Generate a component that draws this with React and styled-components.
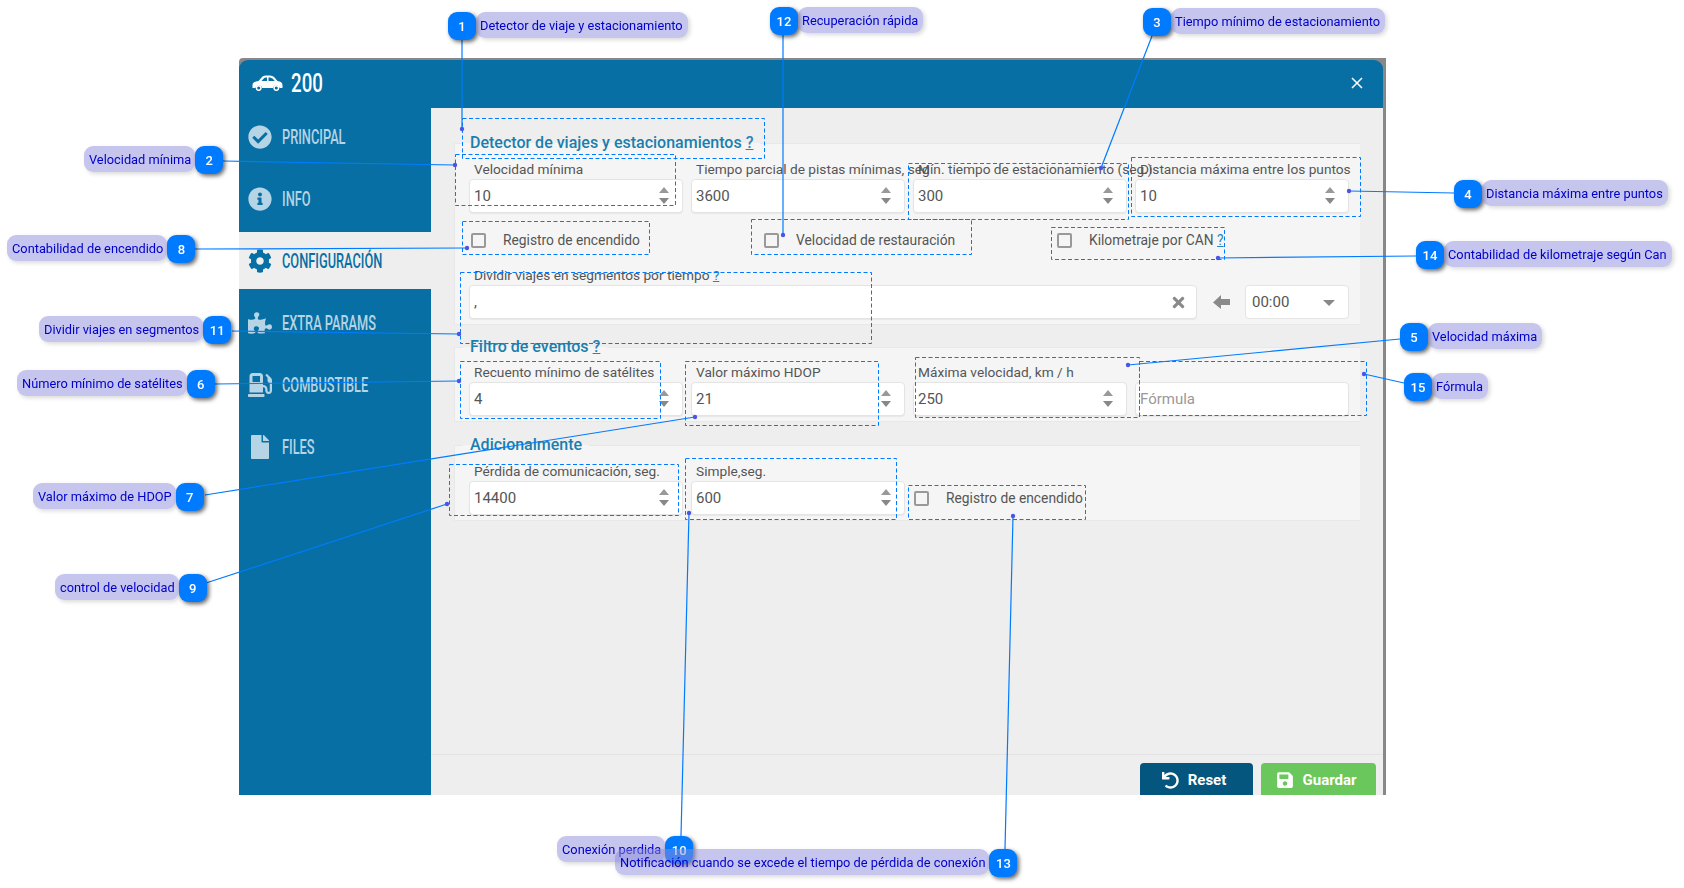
import React from 'react';
import styled, { createGlobalStyle } from 'styled-components';
import {
  FaCheckCircle,
  FaInfoCircle,
  FaCog,
  FaPuzzlePiece,
  FaGasPump,
  FaFile,
  FaTimes,
  FaUndo,
  FaSave,
} from 'react-icons/fa';

const TEAL = '#076fa3';
const BLUE = '#007bff';

const GlobalStyle = createGlobalStyle`
  html, body {
    margin: 0;
    background: #fff;
    overflow: hidden;
  }
  * {
    box-sizing: border-box;
  }
`;

const menu = [
  { name: 'PRINCIPAL', icon: FaCheckCircle },
  { name: 'INFO', icon: FaInfoCircle },
  { name: 'CONFIGURACIÓN', icon: FaCog, active: true },
  { name: 'EXTRA PARAMS', icon: FaPuzzlePiece },
  { name: 'COMBUSTIBLE', icon: FaGasPump },
  { name: 'FILES', icon: FaFile },
];

const callouts = [
  { n: 1, text: 'Detector de viaje y estacionamiento', x: 448, y: 12 },
  { n: 2, text: 'Velocidad mínima', x: 84, y: 146, left: true },
  { n: 3, text: 'Tiempo mínimo de estacionamiento', x: 1143, y: 8 },
  { n: 4, text: 'Distancia máxima entre puntos', x: 1454, y: 180 },
  { n: 5, text: 'Velocidad máxima', x: 1400, y: 323 },
  { n: 6, text: 'Número mínimo de satélites', x: 17, y: 370, left: true },
  { n: 7, text: 'Valor máximo de HDOP', x: 33, y: 483, left: true },
  { n: 8, text: 'Contabilidad de encendido', x: 7, y: 235, left: true },
  { n: 9, text: 'control de velocidad', x: 55, y: 574, left: true },
  { n: 10, text: 'Conexión perdida', x: 557, y: 836, left: true },
  { n: 11, text: 'Dividir viajes en segmentos', x: 39, y: 316, left: true },
  { n: 12, text: 'Recuperación rápida', x: 770, y: 7 },
  { n: 13, text: 'Notificación cuando se excede el tiempo de pérdida de conexión', x: 615, y: 849, left: true },
  { n: 14, text: 'Contabilidad de kilometraje según Can', x: 1416, y: 241 },
  { n: 15, text: 'Fórmula', x: 1404, y: 373 },
];

const leaders = [
  [462, 40, 462, 129],
  [783, 35, 783, 235],
  [1152, 36, 1101, 168],
  [223, 161, 455, 165],
  [195, 249, 467, 248],
  [232, 331, 459, 334],
  [215, 384, 459, 381],
  [1454, 193, 1349, 191],
  [1416, 256, 1218, 258],
  [1400, 339, 1128, 365],
  [1404, 383, 1364, 374],
  [205, 495, 695, 417],
  [206, 583, 447, 504],
  [681, 836, 689, 513],
  [1005, 849, 1013, 516],
];

const frames = [
  [462, 118, 764, 158],
  [455, 154, 675, 205],
  [908, 163, 1128, 219],
  [1131, 157, 1360, 216],
  [751, 219, 971, 254],
  [462, 221, 649, 254],
  [1051, 227, 1224, 259],
  [460, 272, 871, 343],
  [460, 361, 660, 418],
  [685, 361, 878, 425],
  [915, 357, 1139, 417],
  [1139, 361, 1366, 415],
  [449, 464, 678, 515],
  [685, 458, 896, 519],
  [908, 485, 1085, 519],
];

function CarIcon() {
  return (
    <svg width="31" height="16" viewBox="0 0 31 16">
      <path
        fill="#fff"
        d="M.5 10c0-2.500 2.500-3.500 6-4L10 2C11.200.8 13 .5 16 .5c3.500 0 5 .6 6.500 2L25.500 6c3 .4 5 1.500 5 4v3h-3a3.300 3.300 0 0 0-6.500 0H10a3.300 3.300 0 0 0-6.500 0H.5z"
      />
      <path fill={TEAL} d="M9.500 6l2.300-2.600c.6-.6 1.600-1 3.200-1V6zM16.500 2.400c2 0 3.200.4 4 1.200L22.800 6h-6.300z" />
      <circle cx="6.700" cy="13" r="2.300" fill={TEAL} stroke="#fff" strokeWidth="1.500" />
      <circle cx="24.300" cy="13" r="2.300" fill={TEAL} stroke="#fff" strokeWidth="1.500" />
    </svg>
  );
}

function NumberField({ label, value, placeholder, spin = true }) {
  return (
    <Field>
      <Label>{label}</Label>
      <InputBox>
        <TextInput defaultValue={value} placeholder={placeholder} />
        {spin && (
          <Spinner>
            <Arrow $up />
            <Arrow />
          </Spinner>
        )}
      </InputBox>
    </Field>
  );
}

function Check({ children }) {
  return (
    <CheckRow>
      <CheckBox type="checkbox" />
      <span>{children}</span>
    </CheckRow>
  );
}

function Settings() {
  return (
    <>
      <Group>
        <Legend>
          Detector de viajes y estacionamientos <Help>?</Help>
        </Legend>
        <Fields>
          <NumberField label="Velocidad mínima" value="10" />
          <NumberField label="Tiempo parcial de pistas mínimas, seg" value="3600" />
          <NumberField label="Mín. tiempo de estacionamiento (seg.)" value="300" />
          <NumberField label="Distancia máxima entre los puntos" value="10" />
        </Fields>
        <Checks>
          <Check>Registro de encendido</Check>
          <Check>Velocidad de restauración</Check>
          <Check>
            Kilometraje por CAN <Help>?</Help>
          </Check>
        </Checks>
        <Field>
          <Label>
            Dividir viajes en segmentos por tiempo <Help>?</Help>
          </Label>
          <SplitRow>
            <InputBox>
              <TextInput defaultValue="," />
              <ClearIcon>
                <FaTimes size={17} />
              </ClearIcon>
            </InputBox>
            <SwapIcon>
              <svg width="17" height="14" viewBox="0 0 17 14">
                <path fill="currentColor" d="M0 7.500L8 0v4h9v6H8v4z" />
              </svg>
            </SwapIcon>
            <TimeSelect>
              00:00
              <Caret />
            </TimeSelect>
          </SplitRow>
        </Field>
      </Group>

      <Group $gap={14} $top={7}>
        <Legend>
          Filtro de eventos <Help>?</Help>
        </Legend>
        <Fields>
          <NumberField label="Recuento mínimo de satélites" value="4" />
          <NumberField label="Valor máximo HDOP" value="21" />
          <NumberField label="Máxima velocidad, km / h" value="250" />
          <NumberField label="" placeholder="Fórmula" spin={false} />
        </Fields>
      </Group>

      <Group $top={8}>
        <Legend>Adicionalmente</Legend>
        <Fields>
          <NumberField label="Pérdida de comunicación, seg." value="14400" />
          <NumberField label="Simple,seg." value="600" />
          <Check>Registro de encendido</Check>
        </Fields>
      </Group>
    </>
  );
}

export default function App() {
  return (
    <Stage>
      <GlobalStyle />
      <Modal>
        <Window>
          <Header>
            <CarIcon />
            <Title>200</Title>
            <Close>
              <svg width="12" height="12" viewBox="0 0 12 12">
                <path d="M1 1l10 10M11 1L1 11" stroke="#fff" strokeWidth="1.500" />
              </svg>
            </Close>
          </Header>
          <Body>
            <Sidebar>
              {menu.map(item => (
                <MenuItem key={item.name} $active={item.active}>
                  <MenuIcon>
                    <item.icon size={24} />
                  </MenuIcon>
                  <MenuText>{item.name}</MenuText>
                </MenuItem>
              ))}
            </Sidebar>
            <Content>
              <Form>
                <Settings />
              </Form>
              <Footer>
                <Button $color="#04567f" $width={113}>
                  <FaUndo size={17} />
                  Reset
                </Button>
                <Button $color="#69c75b" $width={115}>
                  <FaSave size={18} />
                  Guardar
                </Button>
              </Footer>
            </Content>
          </Body>
        </Window>
      </Modal>

      <Overlay width="1684" height="888">
        {frames.map(([x1, y1, x2, y2]) => (
          <rect
            key={`${x1}-${y1}`}
            x={x1 + 0.5}
            y={y1 + 0.5}
            width={x2 - x1}
            height={y2 - y1}
            fill="none"
            stroke={BLUE}
            strokeDasharray="4 2.500"
          />
        ))}
        {leaders.map(([x1, y1, x2, y2]) => (
          <g key={`${x1}-${y1}`}>
            <line x1={x1} y1={y1} x2={x2} y2={y2} stroke={BLUE} strokeWidth="1.200" />
            <circle cx={x2} cy={y2} r="2.200" fill="#4a55e6" />
          </g>
        ))}
      </Overlay>

      {callouts.map(c => (
        <Callout key={c.n} $x={c.x} $y={c.y} $left={c.left}>
          <Pill $left={c.left}>{c.text}</Pill>
          <Badge>{c.n}</Badge>
        </Callout>
      ))}
    </Stage>
  );
}

const Stage = styled.div`
  position: relative;
  width: 1684px;
  height: 888px;
  padding: 58px 0 0 239px;
  overflow: hidden;
  font-family: 'Roboto', 'Liberation Sans', sans-serif;
  filter: blur(0.35px);
`;

const Modal = styled.div`
  width: 1147px;
  height: 737px;
  padding: 2px 3px 0 0;
  background: #888;
  border-top-left-radius: 4px;
`;

const Window = styled.div`
  height: 100%;
  display: flex;
  flex-direction: column;
  background: ${TEAL};
  border-radius: 9px 9px 0 0;
  overflow: hidden;
`;

const Header = styled.div`
  height: 48px;
  flex: none;
  display: flex;
  align-items: center;
  padding: 0 20px 2px 13px;
`;

const Title = styled.div`
  margin-left: 8px;
  color: #fff;
  font-size: 26px;
  font-weight: 500;
  transform: scaleX(0.72);
  transform-origin: left;
`;

const Close = styled.div`
  margin-left: auto;
  display: flex;
`;

const Body = styled.div`
  flex: 1;
  display: flex;
  min-height: 0;
`;

const Sidebar = styled.div`
  width: 192px;
  flex: none;
  display: flex;
  flex-direction: column;
  gap: 5px;
`;

const MenuItem = styled.div`
  height: 57px;
  flex: none;
  display: flex;
  align-items: center;
  padding-left: 9px;
  background: ${p => (p.$active ? '#eeeeee' : 'transparent')};
  color: ${p => (p.$active ? TEAL : '#b5d4e5')};
`;

const MenuIcon = styled.div`
  width: 34px;
  flex: none;
  display: flex;
`;

const MenuText = styled.div`
  font-size: 20px;
  font-weight: 500;
  white-space: nowrap;
  transform: scaleX(0.64);
  transform-origin: left;
`;

const Content = styled.div`
  flex: 1;
  display: flex;
  flex-direction: column;
  background: #eeeeee;
`;

const Form = styled.div`
  flex: 1;
  padding: 26px 23px 0 23px;
`;

const Group = styled.fieldset`
  margin: 0 0 ${p => p.$gap || 13}px;
  padding: ${p => p.$top || 8}px 11px 5px 14px;
  min-width: 0;
  background: #f5f5f5;
  border: 1px solid #e8e8e8;
  border-right: none;
`;

const Legend = styled.legend`
  margin-left: -6px;
  padding: 0 7px;
  color: #1a7fae;
  font-size: 16px;
  font-weight: 500;
  line-height: 18px;
`;

const Help = styled.span`
  color: #2d83b5;
  text-decoration: underline;
`;

const Fields = styled.div`
  display: grid;
  grid-template-columns: repeat(4, 1fr);
  gap: 8px;
  align-items: end;
`;

const Field = styled.div`
  min-width: 0;
`;

const Label = styled.div`
  height: 18px;
  margin-bottom: 1px;
  padding-left: 5px;
  color: #555;
  font-size: 13.700px;
  line-height: 18px;
  white-space: nowrap;
`;

const InputBox = styled.div`
  position: relative;
  flex: 1;
  height: 34px;
`;

const TextInput = styled.input`
  display: block;
  width: 100%;
  height: 100%;
  padding: 0 4px 1px;
  border: 1px solid #e4e4e4;
  border-radius: 4px;
  background: #fff;
  box-shadow: 0 1px 1px rgba(0, 0, 0, 0.06);
  outline: none;
  color: #555;
  font-family: inherit;
  font-size: 15px;
  &::placeholder {
    color: #999;
  }
`;

const Spinner = styled.div`
  position: absolute;
  top: 8px;
  right: 14px;
  display: flex;
  flex-direction: column;
  gap: 5px;
`;

const Arrow = styled.div`
  width: 0;
  height: 0;
  border-left: 5.500px solid transparent;
  border-right: 5.500px solid transparent;
  ${p => (p.$up ? 'border-bottom: 6px solid #999;' : 'border-top: 6px solid #888;')}
`;

const ClearIcon = styled.div`
  position: absolute;
  top: 9px;
  right: 10px;
  display: flex;
  color: #8a8a8a;
`;

const SwapIcon = styled.div`
  width: 48px;
  flex: none;
  display: flex;
  justify-content: center;
  color: #8a8a8a;
`;

const Checks = styled.div`
  display: grid;
  grid-template-columns: 293px 293px 1fr;
  margin: 10px 0 9px 1px;
`;

const CheckRow = styled.label`
  height: 34px;
  display: flex;
  align-items: center;
  color: #555;
  font-size: 13.800px;
  white-space: nowrap;
`;

const CheckBox = styled.input`
  appearance: none;
  width: 15px;
  height: 15px;
  margin: 0 17px 0 1px;
  flex: none;
  border: 2px solid #999;
  border-radius: 2px;
  background: transparent;
`;

const SplitRow = styled.div`
  display: flex;
  align-items: center;
`;

const TimeSelect = styled.div`
  position: relative;
  width: 104px;
  height: 34px;
  flex: none;
  padding-left: 6px;
  display: flex;
  align-items: center;
  border: 1px solid #e4e4e4;
  border-radius: 4px;
  background: #fff;
  color: #555;
  font-size: 15px;
`;

const Caret = styled.div`
  position: absolute;
  right: 13px;
  top: 14px;
  border-left: 6px solid transparent;
  border-right: 6px solid transparent;
  border-top: 6px solid #888;
`;

const Footer = styled.div`
  height: 41px;
  flex: none;
  display: flex;
  justify-content: flex-end;
  gap: 8px;
  padding: 8px 7px 0 0;
  border-top: 1px solid #e3e3e3;
`;

const Button = styled.button`
  width: ${p => p.$width}px;
  height: 34px;
  flex: none;
  display: flex;
  align-items: center;
  justify-content: center;
  gap: 9px;
  padding: 0 5px 0 0;
  border: none;
  border-radius: 4px 4px 0 0;
  background: ${p => p.$color};
  color: #fff;
  font-family: inherit;
  font-size: 15px;
  font-weight: 700;
`;

const Overlay = styled.svg`
  position: absolute;
  left: 0;
  top: 0;
`;

const Callout = styled.div`
  position: absolute;
  left: ${p => p.$x}px;
  top: ${p => p.$y}px;
  display: flex;
  flex-direction: ${p => (p.$left ? 'row' : 'row-reverse')};
`;

const Pill = styled.div`
  height: 26px;
  padding: ${p => (p.$left ? '0 4px 0 5px' : '0 5px 0 4px')};
  display: flex;
  align-items: center;
  border-radius: 9px;
  background: rgba(140, 140, 220, 0.5);
  box-shadow: 2px 2px 4px rgba(0, 0, 0, 0.15);
  color: #0000cc;
  font-size: 12.800px;
  white-space: nowrap;
`;

const Badge = styled.div`
  width: 28px;
  height: 28px;
  flex: none;
  display: flex;
  align-items: center;
  justify-content: center;
  border-radius: 9px;
  background: ${BLUE};
  box-shadow: 2px 2px 4px rgba(0, 0, 0, 0.6);
  color: #fff;
  font-size: 13px;
  font-weight: 500;
`;
